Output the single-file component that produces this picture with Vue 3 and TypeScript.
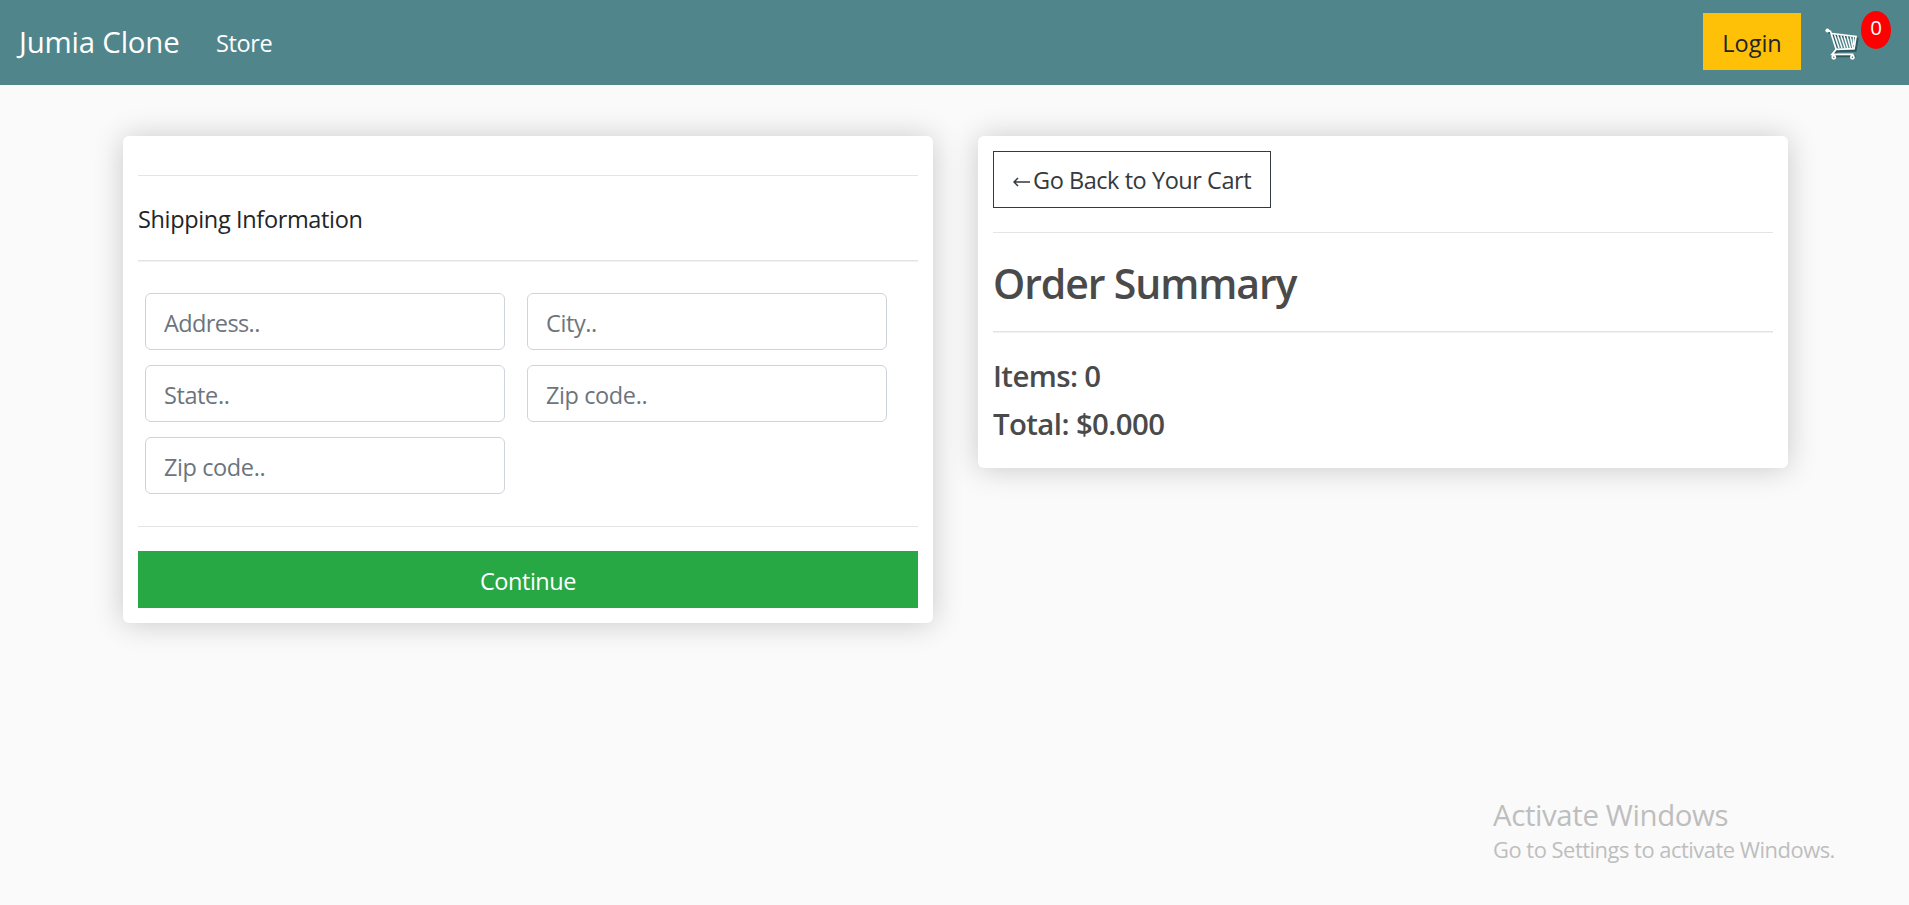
<script setup lang="ts">
import { ref } from 'vue'

interface Field {
  id: string
  placeholder: string
}

const fields: Field[] = [
  { id: 'address', placeholder: 'Address..' },
  { id: 'city', placeholder: 'City..' },
  { id: 'state', placeholder: 'State..' },
  { id: 'zipcode', placeholder: 'Zip code..' },
  { id: 'country', placeholder: 'Zip code..' },
]

const itemCount = ref<number>(0)
const total = ref<number>(0)
</script>

<template>
  <div class="page">
    <nav class="navbar">
      <a class="brand">Jumia Clone</a>
      <a class="store">Store</a>
      <div class="nav-right">
        <button class="login">Login</button>
        <svg class="cart" viewBox="0 0 36 36" width="36" height="36" fill="none">
          <g class="cart-shadow" transform="translate(1.6 1.8)">
            <path d="M3 3.5 6.5 5 12 23 M7 6.5 32 10 30 22 11.5 22.5 8.5 27.5H30" />
          </g>
          <g class="cart-lines">
            <path d="M3 3 6.5 4.5 12.2 22.3 30 21.7 32 9.5 7.8 6.5" />
            <path class="thin" d="M10.5 7.5 15 21M13.6 8 18 21M16.8 8.4 21 21M20 8.8 23.7 21M23.2 9.2 26.4 21M26.4 9.6 28.8 21M29.4 10 29.6 18" />
            <path d="M12.2 22.3 8 27.4H29.5" />
            <circle cx="9.8" cy="30.2" r="1.6" />
            <circle cx="28.4" cy="30.2" r="1.6" />
          </g>
          <circle cx="3.4" cy="3.4" r="2" fill="#fff" />
        </svg>
        <span class="badge">{{ itemCount }}</span>
      </div>
    </nav>

    <main class="content">
      <section class="card shipping">
        <hr class="first" />
        <p class="shipping-title">Shipping Information</p>
        <hr class="soft" />
        <form class="fields" @submit.prevent>
          <input v-for="f in fields" :key="f.id" :class="f.id" type="text" :placeholder="f.placeholder" />
        </form>
        <hr />
        <button class="continue">Continue</button>
      </section>

      <section class="card summary">
        <a class="back"><svg class="arrow" viewBox="0 0 18 12" width="18" height="12" fill="none" stroke="#343a40" stroke-width="1.5"><path d="M1 6H17M5 2 1 6l4 4" /></svg><span>Go Back to Your Cart</span></a>
        <hr />
        <h3>Order Summary</h3>
        <hr class="soft" />
        <h5 class="items">Items: {{ itemCount }}</h5>
        <h5 class="total">Total: ${{ total.toFixed(3) }}</h5>
      </section>
    </main>

    <aside class="activate">
      <div class="activate-title">Activate Windows</div>
      <div class="activate-text">Go to Settings to activate Windows.</div>
    </aside>
  </div>
</template>

<style>
body {
  margin: 0;
  background: #fafafa;
}
</style>

<style scoped>
.page {
  position: relative;
  height: 905px;
  overflow: hidden;
  background: #fafafa;
  color: #212529;
  font-family: "Open Sans", "Noto Sans", sans-serif;
  font-size: 23.5px;
  line-height: 36px;
}

.page * {
  box-sizing: border-box;
}

button,
input {
  font: inherit;
}

.navbar {
  display: flex;
  align-items: center;
  height: 85px;
  padding: 0 18px 0 19px;
  background: #50868b;
  color: #fff;
}

.brand {
  width: 197px;
  margin-top: -2px;
  font-size: 29.4px;
  letter-spacing: -0.2px;
  white-space: nowrap;
}

.store {
  letter-spacing: -0.4px;
}

.nav-right {
  display: flex;
  margin-left: auto;
  height: 85px;
}

.login {
  width: 98px;
  height: 57px;
  margin-top: 13px;
  padding: 2px 0 0;
  border: 0;
  background: #ffc107;
  color: #212529;
}

.cart {
  margin: 27px 0 0 23px;
}

.cart-shadow {
  stroke: #25474b;
  stroke-opacity: 0.75;
  stroke-width: 2;
}

.cart-lines {
  stroke: #fff;
  stroke-width: 1.7;
}

.cart-lines .thin {
  stroke-width: 1.4;
}

.badge {
  width: 30px;
  height: 38px;
  margin-top: 11px;
  margin-left: 1px;
  border-radius: 50%;
  background: #f00;
  font-size: 20.5px;
  line-height: 33px;
  text-align: center;
}

.content {
  display: flex;
  align-items: flex-start;
  gap: 45px;
  padding: 51px 0 0 123px;
}

.card {
  width: 810px;
  padding: 15px;
  border-radius: 6px;
  background: #fff;
  box-shadow: 0 1px 30px rgba(0, 0, 0, 0.2);
}

.shipping {
  height: 487px;
}

.summary {
  height: 332px;
}

hr {
  height: 1px;
  margin: 24px 0;
  border: 0;
  background: #e5e5e5;
}

hr.soft {
  height: 2px;
  background: linear-gradient(#e3e3e3 50%, #f1f1f1 50%);
}

.shipping-title {
  height: 36px;
  margin: 0;
  line-height: 38px;
  letter-spacing: -0.35px;
}

.shipping hr.soft {
  margin: 24px 0 0;
}

.fields {
  display: grid;
  grid-template-columns: 360px 360px;
  gap: 15px 22px;
  padding: 31px 7px 32px;
}

.fields + hr {
  margin-top: 0;
}

.fields input {
  height: 57px;
  padding: 3px 18px 0;
  border: 1px solid #ced4da;
  border-radius: 6px;
  background: #fff;
  letter-spacing: -0.4px;
}

.fields input.address {
  letter-spacing: -0.6px;
}

.fields input::placeholder {
  color: #6c757d;
  opacity: 1;
}

.continue {
  display: block;
  width: 100%;
  height: 57px;
  padding: 2px 0 0;
  border: 0;
  background: #28a745;
  color: #fff;
  letter-spacing: -0.45px;
}

.back {
  display: flex;
  align-items: center;
  width: 278px;
  height: 57px;
  padding: 1px 0 0 19px;
  border: 1px solid #343a40;
  color: #343a40;
  letter-spacing: -0.45px;
  white-space: nowrap;
}

.arrow {
  margin: 3px 2px 0 0;
}

h3,
h5 {
  margin: 0;
  color: #4a4a4a;
  font-weight: 600;
}

h3 {
  height: 50px;
  font-size: 41px;
  line-height: 52px;
  letter-spacing: -1.1px;
}

h5 {
  height: 48px;
  font-size: 29.4px;
  line-height: 38px;
  letter-spacing: -0.6px;
}

.activate {
  position: absolute;
  left: 1493px;
  top: 795px;
  color: #bebebe;
  white-space: nowrap;
}

.activate-title {
  font-size: 29.4px;
  line-height: 40px;
  letter-spacing: -0.38px;
}

.activate-text {
  font-size: 21.9px;
  line-height: 29px;
  letter-spacing: -0.48px;
}
</style>
